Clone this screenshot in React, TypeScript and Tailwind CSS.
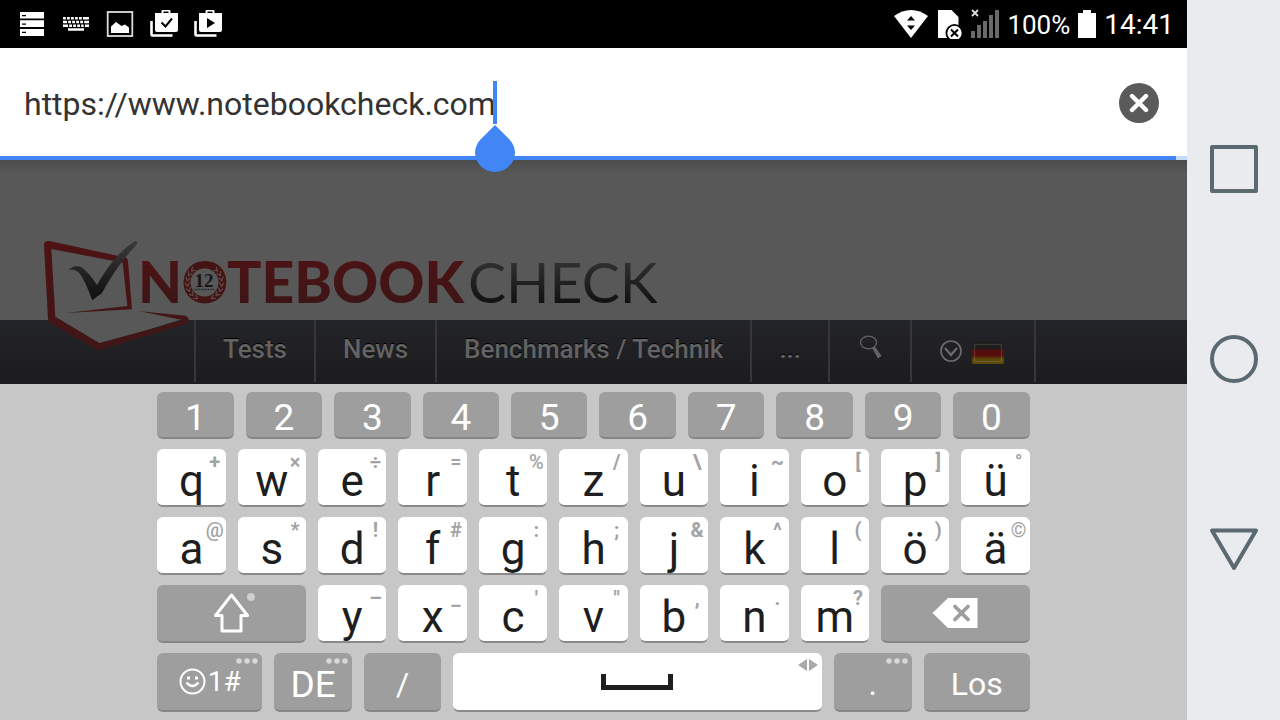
import React from "react";

type KeyDef = { label: string; hint: string; hintClass?: string };

const digits = ["1", "2", "3", "4", "5", "6", "7", "8", "9", "0"];

const topRow: KeyDef[] = [
  { label: "q", hint: "+", hintClass: "font-bold" },
  { label: "w", hint: "×", hintClass: "font-bold" },
  { label: "e", hint: "÷", hintClass: "font-bold" },
  { label: "r", hint: "=", hintClass: "font-medium" },
  { label: "t", hint: "%", hintClass: "font-medium" },
  { label: "z", hint: "/", hintClass: "font-bold" },
  { label: "u", hint: "\\", hintClass: "font-bold" },
  { label: "i", hint: "~", hintClass: "font-bold" },
  { label: "o", hint: "[", hintClass: "font-bold" },
  { label: "p", hint: "]", hintClass: "font-bold" },
  { label: "ü", hint: "°", hintClass: "font-bold" },
];

const homeRow: KeyDef[] = [
  { label: "a", hint: "@", hintClass: "font-medium" },
  { label: "s", hint: "*", hintClass: "font-bold" },
  { label: "d", hint: "!", hintClass: "font-bold" },
  { label: "f", hint: "#", hintClass: "font-bold" },
  { label: "g", hint: ":", hintClass: "font-bold" },
  { label: "h", hint: ";", hintClass: "font-bold" },
  { label: "j", hint: "&", hintClass: "font-bold" },
  { label: "k", hint: "^", hintClass: "font-bold" },
  { label: "l", hint: "(", hintClass: "font-bold" },
  { label: "ö", hint: ")", hintClass: "font-bold" },
  { label: "ä", hint: "©", hintClass: "font-medium" },
];

const bottomRow: KeyDef[] = [
  { label: "y", hint: "–", hintClass: "font-bold" },
  { label: "x", hint: "_", hintClass: "font-bold" },
  { label: "c", hint: "'", hintClass: "font-bold" },
  { label: "v", hint: '"', hintClass: "font-bold" },
  { label: "b", hint: ",", hintClass: "font-bold" },
  { label: "n", hint: ".", hintClass: "font-bold" },
  { label: "m", hint: "?", hintClass: "font-bold" },
];

function LetterKey({ label, hint, hintClass = "" }: KeyDef) {
  return (
    <button
      type="button"
      className="relative h-[58px] overflow-hidden rounded-md border-b-2 border-[#8a8a8a] bg-white pt-2 text-center text-[44px] leading-[48px] text-[#1e1e1e]"
    >
      {label}
      <span
        className={`absolute top-0 right-0 w-[22px] text-center text-[20px] leading-[26px] text-[#a3a3a3] ${hintClass}`}
      >
        {hint}
      </span>
    </button>
  );
}

function GrayKey({
  className = "",
  label,
  children,
}: {
  className?: string;
  label?: string;
  children: React.ReactNode;
}) {
  return (
    <button
      type="button"
      aria-label={label}
      className={`relative overflow-hidden rounded-md border-b-2 border-[#868686] bg-[#9e9e9e] text-center text-white ${className}`}
    >
      {children}
    </button>
  );
}

function MoreDots() {
  return (
    <svg className="absolute top-[5px] right-1 h-1.5 w-[22px]" viewBox="0 0 22 6" fill="#d6d6d6">
      <circle cx="3" cy="3" r="2.8" />
      <circle cx="11" cy="3" r="2.8" />
      <circle cx="19" cy="3" r="2.8" />
    </svg>
  );
}

function StatusBar() {
  return (
    <header className="flex h-12 items-center bg-black text-white">
      <div className="flex flex-1 items-center gap-4 pl-[18px]">
        <svg className="h-7 w-7" viewBox="0 0 28 28">
          <path fill="#fff" d="M2 2h24v6.500H2zM2 10.200h24v6.800H2zM2 19h24v7H2z" />
          <path fill="#000" d="M4 5h4v1.200H4zM4 13.500h4v1.200H4zM4 21.800h4V23H4z" />
        </svg>
        <svg className="h-7 w-7" viewBox="0 0 28 28" fill="#fff">
          <path d="M1 7h2.800v2.500H1zM5 7h2.800v2.500H5zM9 7h2.800v2.500H9zM13 7h2.800v2.500H13zM17 7h2.800v2.500H17zM21 7h6v2.500h-6zM1 10.800h4v2.500H1zM6.200 10.800H9v2.500H6.200zM10.200 10.800H13v2.500h-2.800zM14.200 10.800H17v2.500h-2.800zM18.200 10.800H21v2.500h-2.800zM22.200 10.800h4.800v2.500h-4.800zM1 14.600h5v2.500H1zM7.200 14.600H10v2.500H7.200zM11.200 14.600H14v2.500h-2.800zM15.200 14.600H18v2.500h-2.800zM19.200 14.600h2.500v2.500h-2.500zM23 14.600h4v2.500h-4zM6 18.300h16v2.400H6z" />
        </svg>
        <svg className="h-7 w-7" viewBox="0 0 28 28">
          <rect x="1.700" y="2" width="24.600" height="24" fill="none" stroke="#ddd" strokeWidth="1.800" />
          <path fill="#fff" d="M5 23v-6.500l5-4.500 5.500 4 3.500-1.500 4 3V23z" />
        </svg>
        <svg className="h-7 w-7" viewBox="0 0 28 28">
          <path d="M1.500 11v13.500q0 1 1 1H22.500" fill="none" stroke="#fff" strokeWidth="2.600" />
          <path d="M12.500 4V1.800q0-1.300 1-1.300h5q1 0 1 1.300V4" fill="none" stroke="#fff" strokeWidth="2" />
          <path fill="#fff" d="M5 3h23v17q0 2-2 2H7q-2 0-2-2z" />
          <path d="M11.500 12.500l4 4 6.500-8" fill="none" stroke="#000" strokeWidth="2" />
        </svg>
        <svg className="h-7 w-7" viewBox="0 0 28 28">
          <path d="M1.500 11v13.500q0 1 1 1H22.500" fill="none" stroke="#fff" strokeWidth="2.600" />
          <path d="M12.500 4V1.800q0-1.300 1-1.300h5q1 0 1 1.300V4" fill="none" stroke="#fff" strokeWidth="2" />
          <path fill="#fff" d="M5 3h23v17q0 2-2 2H7q-2 0-2-2z" />
          <path fill="#000" d="M13 8v10l8-5z" />
        </svg>
      </div>
      <div className="flex items-center gap-2 pr-[13px]">
        <svg className="h-[30px] w-9" viewBox="0 0 36 30">
          <path fill="#fff" d="M1 7Q9 1 18 1t17 6L18 29z" />
          <path fill="#000" d="M18 7l4 4.500h-8zM18 21l-4-4.500h8z" />
        </svg>
        <svg className="h-[30px] w-[26px]" viewBox="0 0 26 30">
          <path fill="#fff" d="M1 1h13.500l7 7v21H1z" />
          <circle cx="17.500" cy="24" r="9" fill="#000" />
          <circle cx="17.500" cy="24" r="7.200" fill="#fff" />
          <path d="M14 20.500l7 7m0-7l-7 7" stroke="#000" strokeWidth="2" />
        </svg>
        <svg className="h-[30px] w-7" viewBox="0 0 28 30">
          <path
            fill="#6a6a6a"
            d="M0 22h4v7H0zM6 16h4v13H6zM12 12h4v17h-4zM18 6h4v23h-4zM24 1h4v28h-4z"
          />
          <path d="M1 1l6 6m0-6l-6 6" stroke="#ddd" strokeWidth="1.800" />
        </svg>
        <span className="pt-0.5 text-[26px] leading-[46px]">100%</span>
        <svg className="h-7 w-[18px]" viewBox="0 0 18 28" fill="#fff">
          <path d="M5 0h8v3h5v25H0V3h5z" />
        </svg>
        <span className="pt-0.5 text-[28px] leading-[46px]">14:41</span>
      </div>
    </header>
  );
}

function AddressBar() {
  return (
    <section className="relative z-10 bg-white">
      <div className="flex h-[108px] items-center justify-between pt-0.5 pr-7 pl-6">
        <div className="relative">
          <input
            type="text"
            aria-label="Address"
            defaultValue="https://www.notebookcheck.com"
            className="block field-sizing-content pt-0.5 text-[32px] leading-[42px] text-[#333] outline-none"
          />
          <span className="absolute top-0 -right-px h-[43px] w-1 bg-[#4285f4]" />
          <svg className="absolute top-[43px] -right-[19px] h-12 w-10" viewBox="0 0 40 48">
            <path
              fill="#4285f4"
              d="M20 1L34.500 15.500A20 20 0 0 1 40 28.500A20 19.500 0 0 1 0 28.500A20 20 0 0 1 5.500 15.500z"
            />
          </svg>
        </div>
        <button
          type="button"
          aria-label="Clear"
          className="flex size-10 items-center justify-center rounded-full bg-[#5a5a5a]"
        >
          <svg className="size-5" viewBox="0 0 20 20">
            <path d="M3 3l14 14m0-14L3 17" stroke="#fff" strokeWidth="4.400" strokeLinecap="round" />
          </svg>
        </button>
      </div>
      <div className="h-1 bg-[#c8dafc] pr-[11px]">
        <div className="h-1 bg-[#4285f4]" />
      </div>
    </section>
  );
}

function Logo() {
  const leaves = [0, 1, 2, 3, 4, 5, 6];
  return (
    <svg className="absolute top-[65px] left-[30px] h-[130px] w-[640px]" viewBox="0 0 640 130">
      <defs>
        <linearGradient id="red" gradientUnits="userSpaceOnUse" x1="0" y1="37" x2="0" y2="80">
          <stop offset="0" stopColor="#4b1315" />
          <stop offset="1" stopColor="#3c1516" />
        </linearGradient>
        <linearGradient id="dark" gradientUnits="userSpaceOnUse" x1="0" y1="37" x2="0" y2="80">
          <stop offset="0" stopColor="#303030" />
          <stop offset="1" stopColor="#101010" />
        </linearGradient>
        <linearGradient id="frame" x1="0" y1="0" x2="0" y2="1">
          <stop offset="0" stopColor="#4d1214" />
          <stop offset="1" stopColor="#3f1617" />
        </linearGradient>
        <linearGradient id="tick" x1="0" y1="0" x2="0" y2="1">
          <stop offset="0" stopColor="#3a3a3a" />
          <stop offset="1" stopColor="#0e0e0e" />
        </linearGradient>
      </defs>
      <g transform="scale(0.33333)">
        <path fill="#585858" d="M70 262L330 259L465 280L208 360L70 282z" />
        <path
          fill="url(#frame)"
          fillRule="evenodd"
          d="M42 62Q41 46 58 48L284 97Q293 99 294 108L306 253L108 264L292 243L278 113L64 72L76 275L208 354L460 286L330 259L466 272Q478 276 476 288Q474 294 466 297L214 374Q206 378 198 373L60 294Q54 290 54 282z"
        />
        <path
          fill="url(#tick)"
          d="M115 135Q135 117 156 128Q176 141 201 180Q235 120 270 85Q295 60 316 48Q324 48 319 60Q290 90 265 125Q240 160 214 207L206 211L187 226Q165 165 147 143Q132 130 115 135z"
        />
      </g>
      <text x="108" y="78" fontFamily="Lato, sans-serif" fontWeight="900" fontSize="57" fill="url(#red)">
        NOTEBOOK
      </text>
      <text x="438" y="78" fontFamily="Lato, sans-serif" fontWeight="400" fontSize="57" fill="url(#dark)">
        CHECK
      </text>
      <circle cx="174.500" cy="57.500" r="17.500" fill="none" stroke="#441415" strokeWidth="7" />
      <circle cx="174.500" cy="57.500" r="14" fill="#585858" />
      <g fill="none" stroke="#5c4a4a" strokeWidth="1.300" strokeLinecap="round">
        {leaves.map((i) => (
          <g key={i}>
            <path d="M157 58l-1.500-3.500M157 58l2.500-3" transform={`rotate(${i * 18 - 65} 174.500 57.500)`} />
            <path d="M192 58l1.500-3.500M192 58l-2.500-3" transform={`rotate(${65 - i * 18} 174.500 57.500)`} />
          </g>
        ))}
      </g>
      <text x="174" y="62" textAnchor="middle" fontFamily="Liberation Serif, serif" fontWeight="700" fontSize="19" fill="#161616">
        12
      </text>
      <path d="M164 64.500h21" stroke="#2c2c2c" strokeWidth="1.500" strokeDasharray="1.500 0.800" />
    </svg>
  );
}

function SiteNav() {
  const link =
    "border-r-2 border-[#373737] px-[27px] text-[26px] leading-[58px] font-medium text-[#636363] [text-shadow:0_-1px_0_#000]";
  return (
    <nav className="flex h-16 bg-linear-to-b from-[#232429] to-[#1c1c1e] pb-0.5 pl-[194px]">
      <a href="#tests" className={`border-l-2 ${link}`}>Tests</a>
      <a href="#news" className={link}>News</a>
      <a href="#benchmarks" className={link}>Benchmarks / Technik</a>
      <a href="#more" className={link}>...</a>
      <a href="#search" aria-label="Search" className="flex w-[82px] justify-center border-r-2 border-[#373737] pt-3.5">
        <svg className="h-7 w-7" viewBox="0 0 28 28">
          <ellipse cx="12.500" cy="8.500" rx="8" ry="6.300" fill="none" stroke="#636363" strokeWidth="1.300" />
          <path d="M16 14l3-1.500 6.500 9.500-3.500 2.500z" fill="#636363" />
        </svg>
      </a>
      <a
        href="#language"
        aria-label="Deutsch"
        className="flex w-[124px] items-start gap-2.5 border-r-2 border-[#373737] pt-5 pl-7"
      >
        <svg className="size-[22px]" viewBox="0 0 22 22" fill="none" stroke="#6c6c6c">
          <circle cx="11" cy="11" r="10" strokeWidth="1.700" />
          <path d="M5 8l6 7 6-7" strokeWidth="2.200" />
        </svg>
        <svg className="mt-0.5 h-[22px] w-8" viewBox="0 0 32 22">
          <defs>
            <linearGradient id="flag" x1="0" y1="0" x2="0" y2="1">
              <stop offset="0.250" stopColor="#1c1c1a" />
              <stop offset="0.420" stopColor="#560d0e" />
              <stop offset="0.600" stopColor="#560b0b" />
              <stop offset="0.780" stopColor="#5a4808" />
            </linearGradient>
          </defs>
          <path fill="url(#flag)" d="M0 0h32v22H0z" />
          <rect x="2.500" y="2.500" width="27" height="17" fill="none" stroke="#aaa" strokeOpacity="0.200" strokeWidth="1.500" />
        </svg>
      </a>
    </nav>
  );
}

function Keyboard() {
  return (
    <section className="flex-1 bg-[#c7c7c7] pt-2 pb-2">
      <div className="mx-auto flex w-[73.5%] flex-col gap-2.5">
        <div className="grid grid-cols-10 gap-3">
          {digits.map((d) => (
            <GrayKey key={d} className="h-[47px] pt-1.5 text-[37px] leading-[39px]">
              {d}
            </GrayKey>
          ))}
        </div>
        <div className="grid grid-cols-11 gap-3">
          {topRow.map((k) => (
            <LetterKey key={k.label} {...k} />
          ))}
        </div>
        <div className="grid grid-cols-11 gap-3">
          {homeRow.map((k) => (
            <LetterKey key={k.label} {...k} />
          ))}
        </div>
        <div className="grid grid-cols-11 gap-3">
          <GrayKey label="Shift" className="col-span-2 flex h-[58px] items-center justify-center">
            <svg className="h-10 w-12" viewBox="0 0 48 40">
              <path
                d="M23.500 2L39.500 22.500H33V38H14V22.500H7.500z"
                fill="none"
                stroke="#fff"
                strokeWidth="3"
                strokeLinejoin="round"
              />
              <circle cx="43" cy="4" r="4" fill="#cfcfcf" />
            </svg>
          </GrayKey>
          {bottomRow.map((k) => (
            <LetterKey key={k.label} {...k} />
          ))}
          <GrayKey label="Backspace" className="col-span-2 flex h-[58px] items-center justify-center">
            <svg className="h-[30px] w-[46px]" viewBox="0 0 46 30">
              <path fill="#fff" d="M0.500 15L16 0h29.500v30H16z" />
              <path d="M23 8.500l13 13m0-13l-13 13" stroke="#9e9e9e" strokeWidth="3.800" strokeLinecap="round" />
            </svg>
          </GrayKey>
        </div>
        <div className="grid grid-cols-[105fr_78fr_77fr_369fr_78fr_106fr] gap-3">
          <GrayKey className="flex h-[59px] items-center justify-center gap-0.5 text-[28px] leading-[50px]">
            <svg className="size-[27px]" viewBox="0 0 27 27" fill="none" stroke="#fff" strokeWidth="2">
              <circle cx="13.500" cy="13.500" r="12" />
              <path d="M7.500 14.500q6 7 12 0" strokeWidth="2.400" />
              <path d="M8 10h3M16 10h3" strokeWidth="3" />
            </svg>
            1#
            <MoreDots />
          </GrayKey>
          <GrayKey className="h-[59px] pt-1.5 text-[37px] leading-[50px]">
            DE
            <MoreDots />
          </GrayKey>
          <GrayKey className="h-[59px] pt-1 text-[32px] leading-[50px]">/</GrayKey>
          <button
            type="button"
            aria-label="Space"
            className="relative flex h-[59px] items-center justify-center rounded-md border-b-2 border-[#8a8a8a] bg-white"
          >
            <svg className="h-4 w-[72px]" viewBox="0 0 72 16">
              <path d="M2.500 0v13.500h67V0" fill="none" stroke="#1e1e1e" strokeWidth="5" />
            </svg>
            <svg className="absolute top-1.5 right-1 h-3 w-5" viewBox="0 0 20 12" fill="#a8a8a8">
              <path d="M9 0v12L0 6zM11 0v12l9-6z" />
            </svg>
          </button>
          <GrayKey className="h-[59px] pt-1 text-[32px] leading-[50px]">
            .
            <MoreDots />
          </GrayKey>
          <GrayKey className="h-[59px] pt-1 text-[32px] leading-[50px]">Los</GrayKey>
        </div>
      </div>
    </section>
  );
}

function SystemKeys() {
  return (
    <aside className="flex w-[93px] flex-col items-center justify-center gap-[140px] bg-[#e9ebef] pb-0.5">
      <button type="button" aria-label="Recent apps" className="size-[50px]">
        <svg viewBox="0 0 50 50" fill="none" stroke="#5b6970" strokeWidth="4" strokeLinejoin="round">
          <rect x="3" y="3" width="44" height="44" />
        </svg>
      </button>
      <button type="button" aria-label="Home" className="size-[50px]">
        <svg viewBox="0 0 50 50" fill="none" stroke="#5b6970" strokeWidth="4">
          <circle cx="25" cy="25" r="22" />
        </svg>
      </button>
      <button type="button" aria-label="Back" className="size-[50px]">
        <svg viewBox="0 0 50 50" fill="none" stroke="#5b6970" strokeWidth="4" strokeLinejoin="round">
          <path d="M3 6.500h44L25 44z" />
        </svg>
      </button>
    </aside>
  );
}

export default function App() {
  return (
    <div className="flex min-h-screen w-full font-[Roboto,sans-serif]">
      <main className="flex min-w-0 flex-1 flex-col">
        <StatusBar />
        <AddressBar />
        <div className="relative h-40 bg-[#585858] bg-linear-to-b from-[#4c4c4c] to-[#585858] to-[14px]">
          <Logo />
        </div>
        <SiteNav />
        <Keyboard />
      </main>
      <SystemKeys />
    </div>
  );
}
